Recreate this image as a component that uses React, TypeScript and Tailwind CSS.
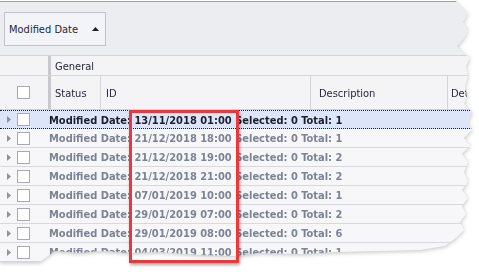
import React from "react";

const rows = [
    { date: "13/11/2018 01:00", total: 1, selected: true },
    { date: "21/12/2018 18:00", total: 1 },
    { date: "21/12/2018 19:00", total: 2 },
    { date: "21/12/2018 21:00", total: 2 },
    { date: "07/01/2019 10:00", total: 1 },
    { date: "29/01/2019 07:00", total: 2 },
    { date: "29/01/2019 08:00", total: 6 },
    { date: "04/03/2019 11:00", total: 1 },
];

function Check() {
    return <div className="h-[13px] w-[13px] shrink-0 border border-[#a9a9b1] bg-white" />;
}

function Expand() {
    return (
        <svg width="4" height="7" viewBox="0 0 4 7" className="shrink-0">
            <path d="M0 0 L4 3.5 L0 7 Z" fill="#8d929c" />
        </svg>
    );
}

export default function App() {
    return (
        <div className="relative h-[274px] w-[479px] overflow-hidden bg-white font-['DejaVu_Sans_Condensed','DejaVu_Sans',sans-serif] text-[11px] text-[#24273a]">
            <div className="w-[474px] drop-shadow-[0_1px_2px_rgba(0,0,0,0.25)]">
                <div className="[clip-path:polygon(0_0,455px_0,458px_4px,462px_8px,468px_14px,463px_22px,468px_30px,463px_40px,457px_46px,462px_52px,470px_58px,466px_66px,468px_76px,465px_86px,467px_96px,464px_104px,472px_112px,468px_122px,472px_130px,464px_138px,470px_146px,462px_154px,468px_162px,464px_172px,468px_182px,462px_190px,468px_198px,462px_206px,466px_214px,460px_222px,464px_230px,456px_238px,445px_246px,420px_250px,380px_251px,340px_252px,300px_254px,260px_253px,236px_256px,200px_255px,160px_252px,130px_253px,100px_251px,80px_253px,55px_251px,40px_262px,20px_265px,0_264px)]">
                    <div className="h-[1px] bg-white" />
                    <div className="h-[1px] bg-[#9e9ea3]" />
                    {/* group panel */}
                    <div className="h-[54px] border-b border-[#d3d4d9] bg-[#ecedf1] pl-[4px] pt-[10px]">
                        <div className="flex h-[34px] w-[102px] items-center border border-[#c2c3c8] bg-[#f3f4f7] pl-[4px] pt-[2px]">
                            <span>Modified Date</span>
                            <svg width="7" height="4" viewBox="0 0 7 4" className="mb-[2px] ml-[14px]">
                                <path d="M0 4 L3.5 0 L7 4 Z" fill="#1c1e2e" />
                            </svg>
                        </div>
                    </div>
                    {/* header band */}
                    <div className="flex h-[20px] border-b border-[#d3d4d9] bg-[#f4f4f7]">
                        <div className="w-[48px] shrink-0" />
                        <div className="w-[3px] shrink-0 bg-[#c8c8ce]" />
                        <div className="flex items-center pl-[4px] pt-[4px]">General</div>
                    </div>
                    {/* column headers */}
                    <div className="flex h-[34px] border-b border-[#d3d4d9] bg-[#f4f4f7]">
                        <div className="flex w-[48px] shrink-0 items-center pl-[17px]">
                            <Check />
                        </div>
                        <div className="w-[3px] shrink-0 bg-[#c8c8ce]" />
                        <div className="flex w-[50px] shrink-0 items-center border-r border-[#d3d4d9] pl-[4px] pt-[4px]">Status</div>
                        <div className="flex w-[210px] shrink-0 items-center border-r border-[#d3d4d9] pl-[5px] pt-[4px]">ID</div>
                        <div className="flex w-[137px] shrink-0 items-center border-r border-[#d3d4d9] pl-[8px] pt-[4px]">Description</div>
                        <div className="flex items-center pl-[3px] pt-[4px]">Det</div>
                    </div>
                    {/* group rows */}
                    {rows.map((r) => (
                        <div
                            key={r.date}
                            className={
                                r.selected
                                    ? "flex h-[19px] items-center border-y border-dotted border-y-[#1c1e2e] bg-[#dde6f8] font-bold text-[#1c1e2e]"
                                    : "flex h-[19px] items-center border-b border-[#d8d9de] bg-[#f7f7fa] font-bold text-[#7c8393]"
                            }
                        >
                            <div className="flex w-[49px] shrink-0 items-center gap-[6px] pl-[7px]">
                                <Expand />
                                <Check />
                            </div>
                            <span className="whitespace-nowrap pt-[3px]">
                                Modified Date: {r.date} Selected: 0 Total: {r.total}
                            </span>
                        </div>
                    ))}
                </div>
            </div>
            <div className="absolute left-[129px] top-[110px] h-[153px] w-[110px] border-[3px] border-[#e8393f] shadow-[1px_2px_3px_rgba(0,0,0,0.35)]" />
        </div>
    );
}
